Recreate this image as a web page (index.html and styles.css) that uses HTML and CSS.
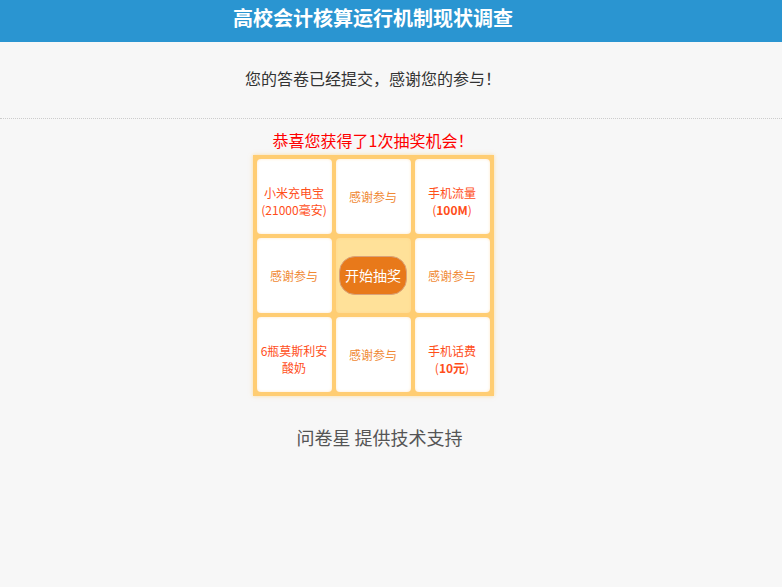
FILE: index.html
```html
<!DOCTYPE html>
<html lang="zh">
<head>
<meta charset="utf-8">
<link rel="stylesheet" href="styles.css">
</head>
<body>
<header class="top"><div class="wrap"><h1 class="title">高校会计核算运行机制现状调查</h1></div></header>
<div class="wrap">
  <div class="thanks">您的答卷已经提交，感谢您的参与！</div>
</div>
<div class="divider"></div>
<div class="wrap">
  <div class="congrats">恭喜您获得了1次抽奖机会！</div>
  <div class="board">
    <div class="cell prize"><span>小米充电宝<br>(21000毫安)</span></div>
    <div class="cell none"><span>感谢参与</span></div>
    <div class="cell prize"><span>手机流量<br>(<b>100M</b>)</span></div>
    <div class="cell none"><span>感谢参与</span></div>
    <div class="cell center"><button class="start">开始抽奖</button></div>
    <div class="cell none"><span>感谢参与</span></div>
    <div class="cell prize"><span>6瓶莫斯利安<br>酸奶</span></div>
    <div class="cell none"><span>感谢参与</span></div>
    <div class="cell prize"><span>手机话费<br>(<b>10元</b>)</span></div>
  </div>
  <div class="footer">问卷星 提供技术支持</div>
</div>
</body>
</html>
```
FILE: styles.css
```css
html, body { margin: 0; padding: 0; }
body {
  background: #f7f7f7;
  font-family: "Microsoft YaHei", "Noto Sans CJK SC", sans-serif;
  color: #333;
  width: 782px;
  height: 587px;
  overflow: hidden;
}
.wrap {
  width: 746px;
}
.top {
  background: #2a95d1;
  height: 42px;
}
.title {
  margin: 0;
  text-align: center;
  color: #fff;
  font-size: 20px;
  font-weight: bold;
  line-height: 36px;
}
.thanks {
  text-align: center;
  font-size: 16px;
  line-height: 24px;
  padding-top: 24px;
  height: 52px;
  color: #333;
}
.divider {
  border-top: 1px dotted #ccc;
  height: 0;
}
.congrats {
  text-align: center;
  color: #f00;
  font-size: 16px;
  line-height: 24px;
  padding-top: 9px;
}
.board {
  margin: 3px auto 0;
  width: 233px;
  padding: 4px;
  background: #ffcd72;
  display: grid;
  grid-template-columns: 75px 75px 75px;
  grid-auto-rows: 75px;
  gap: 4px;
  box-shadow: 0 0 4px rgba(255, 200, 100, 0.6);
}
.cell {
  background: #fff;
  border-radius: 4px;
  display: flex;
  align-items: center;
  justify-content: center;
  text-align: center;
  font-size: 12px;
  line-height: 17px;
  box-shadow: inset 0 0 3px rgba(255, 200, 120, 0.4);
}
.prize { color: #ff4e1a; padding-top: 8px; box-sizing: border-box; }
.prize b { font-weight: bold; }
.none { color: #f08a35; }
.center { background: #ffe199; }
.start {
  width: 68px;
  height: 39px;
  border-radius: 16px;
  background: #e8791a;
  border: 1px solid #d9a37a;
  color: #fff;
  font-family: inherit;
  font-size: 14px;
  padding: 0;
  margin-top: -1px;
}
.footer {
  text-align: center;
  font-size: 18px;
  color: #555;
  line-height: 24px;
  padding-top: 29px;
  padding-left: 13px;
}
```
